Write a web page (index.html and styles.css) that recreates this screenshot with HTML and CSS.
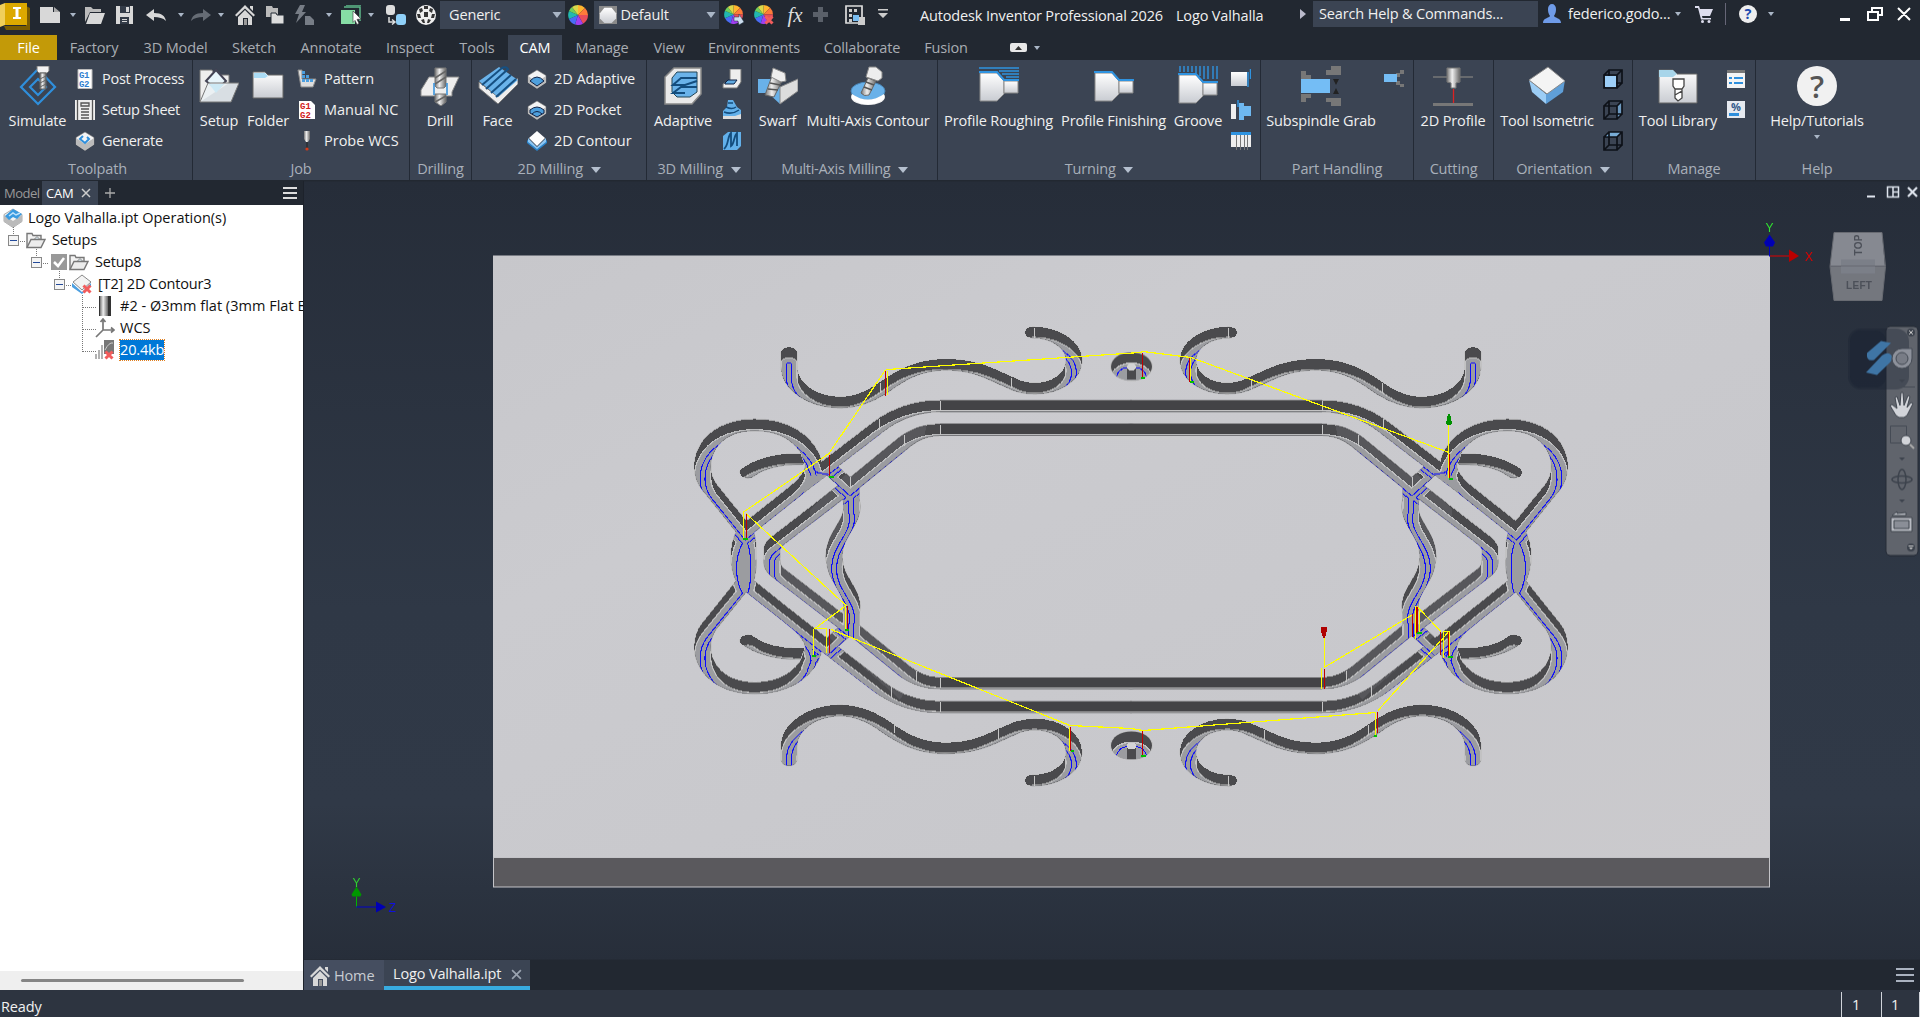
FILE: index.html
```html
<!DOCTYPE html>
<html lang="en">
<head>
<meta charset="utf-8">
<title>Autodesk Inventor Professional 2026</title>
<link rel="stylesheet" href="styles.css">
</head>
<body>
<svg class="defs" width="0" height="0">
  <defs>
    <linearGradient id="steel"><stop offset="0" stop-color="#777"/><stop offset=".4" stop-color="#eee"/><stop offset="1" stop-color="#666"/></linearGradient>
    <linearGradient id="paper" x2="0" y2="1"><stop offset="0" stop-color="#fff"/><stop offset="1" stop-color="#c9ccd2"/></linearGradient>
    <symbol id="wheel" viewBox="0 0 20 20"><g stroke-width="0"><path fill="#ffb52e" d="M10 10V0A10 10 0 0 1 17 3z"/><path fill="#ff7b3a" d="M10 10 17 3A10 10 0 0 1 20 10z"/><path fill="#e84d5b" d="M10 10H20A10 10 0 0 1 15 18.700z"/><path fill="#a03ff0" d="M10 10 15 18.700A10 10 0 0 1 7 19.500z"/><path fill="#4a6cf5" d="M10 10 7 19.500A10 10 0 0 1 1 14z"/><path fill="#22b8b0" d="M10 10 1 14A10 10 0 0 1 1 6z"/><path fill="#6fd05a" d="M10 10 1 6A10 10 0 0 1 4 2z"/><path fill="#d9d94a" d="M10 10 4 2A10 10 0 0 1 10 0z"/></g></symbol>
    <symbol id="caret" viewBox="0 0 6 4"><path fill="#aab6c6" d="M0 0h6L3 4z"/></symbol>
    <symbol id="house" viewBox="0 0 20 20"><path fill="#d8d8d8" d="M10 0 20 10l-1.500 1.500L10 3.500l-8.500 8L0 10zM15 1h3v5l-3-3z"/><path fill="#d8d8d8" d="M10 5l7 7v8h-4v-7H8v7H3v-8z"/><path fill="#999" d="M9 14h3v6H9z"/></symbol>
    <symbol id="turned" viewBox="0 0 40 40"><path fill="url(#paper)" stroke="#888" d="M1 7H18l7 8v13l-7 7H1z"/><path fill="url(#paper)" stroke="#888" d="M25 15H39V27H25z"/><path fill="none" stroke="#2f93e0" stroke-width="2" d="M0 6H18l7 8H40"/></symbol>
    <symbol id="block" viewBox="0 0 20 20"><path fill="#f4f4f4" stroke="#777" stroke-width=".6" d="M10 1l9 5.500v7L10 19.500 1 13.500v-7z"/><path fill="#bbb" d="M1 7l9 6 9-6v6.500l-9 6-9-6z"/></symbol>
    <symbol id="cube" viewBox="0 0 20 20"><path fill="none" stroke="#0d1118" stroke-width="1.700" d="M1 6h13v13H1zM6 1h13v13H6zM1 6l5-5M14 6l5-5M14 19l5-5M1 19l5-5"/></symbol>
    <symbol id="folder" viewBox="0 0 20 16"><path fill="#f2f2f2" stroke="#777" stroke-width="1.400" d="M1 15V1h5l1 2h8v4"/><path fill="#d9eaf2" stroke="#888" d="M6 9l5-5 4 4"/><path fill="#ececec" stroke="#777" stroke-width="1.400" d="M1 15 5 7h14l-4 8z"/></symbol>
    <symbol id="cross" viewBox="0 0 10 10"><path stroke="#f25c5c" stroke-width="3" d="M1.500 1.500l7 7m0-7l-7 7"/></symbol>
  </defs>
</svg>

<header class="titlebar">
  <div class="quick">
    <svg class="logo" viewBox="0 0 30 30"><path fill="#7a5c00" d="M4 26h22V6l4 2v22H6z"/><path fill="#f0cf5a" d="M0 5l5-2v22l-5 2z"/><path fill="#dca900" d="M5 3h22v22H5z"/><path fill="#fff" d="M13 7h8v2h-2.500v8H21v2h-8v-2h2.500V9H13z"/></svg>
    <svg viewBox="0 0 20 20"><path fill="#d8d8d8" d="M0 2h13v5h7v11H0z"/><path fill="#aaa" d="M14 2l6 5h-6z"/></svg>
    <svg class="car"><use href="#caret"/></svg>
    <svg viewBox="0 0 20 20"><path fill="#bbb" d="M0 2h6l2 2h8v3H5L0 17z"/><path fill="#d8d8d8" d="M5 8h15l-4 11H1z"/></svg>
    <svg viewBox="0 0 20 20"><path fill="#d8d8d8" d="M1 1h17v18H1z"/><path fill="#333b47" d="M5 1h10v7H5zM5 12h9v7H5z"/><path fill="#d8d8d8" d="M11 2h3v5h-3zM7 14h5v1H7zM7 16h5v1H7z"/></svg>
    <svg viewBox="0 0 20 20"><path fill="#d8d8d8" d="M0 10l8-6v4c8 0 11 3 12 8-3-3-7-4-12-4v4z"/></svg>
    <svg class="car"><use href="#caret"/></svg>
    <svg viewBox="0 0 20 20"><path fill="#666c75" d="M20 10l-8-6v4C4 8 1 11 0 16c3-3 7-4 12-4v4z"/></svg>
    <svg class="car"><use href="#caret"/></svg>
    <svg><use href="#house"/></svg>
    <svg viewBox="0 0 20 20"><path fill="#bbb" d="M1 1h6l1 2h5v9H1z"/><path fill="#ddd" stroke="#232a34" d="M6 8h5l1 2h7v9H6z"/></svg>
    <svg viewBox="0 0 20 20"><path fill="#777d86" d="M6 0h5L8 7h4L2 18l3-9H1zM11 11h5l4 4v5h-9z"/></svg>
    <svg class="car"><use href="#caret"/></svg>
    <svg viewBox="0 0 20 20"><path fill="none" stroke="#5fb98a" stroke-width="1.500" d="M3 2h16v14M5 0h15"/><path fill="#86dda5" d="M0 5h14v14H0z"/><path fill="#fff" stroke="#333" stroke-width=".6" d="M12 6l8 8-4 .4 2 4-2 1-2-4-2 2z"/></svg>
    <svg class="car"><use href="#caret"/></svg>
    <svg viewBox="0 0 20 20"><rect width="9" height="10" rx="3" fill="#ddd"/><rect x="10" y="9" width="10" height="11" rx="3" fill="#8fd0f8"/><path fill="none" stroke="#ddd" stroke-width="1.500" d="M3 12v5h5M6 14.500l3 2.500-3 2.500"/></svg>
    <svg viewBox="0 0 20 20"><circle cx="10" cy="10" r="10" fill="#eee"/><path fill="#333" d="M8 1h4v3H8zM3 4l3-1 1 3-3 2zM17 4l-3-1-1 3 3 2zM8 7h4v5H8zM1 9h3l1 4H2zM19 9h-3l-1 4h3zM5 15l3-1 1 4H7zM15 15l-3-1-1 4h2z"/></svg>
    <div class="combo"><span>Generic</span><svg class="big-caret"><use href="#caret"/></svg></div>
    <svg><use href="#wheel"/></svg>
    <div class="combo"><svg class="swatch" viewBox="0 0 20 20"><path fill="#8a8a8a" d="M0 0h20v20H0z"/><path fill="url(#paper)" d="M6 2h8l5 6v6l-5 5H6l-5-5V8z"/></svg><span>Default</span><svg class="big-caret"><use href="#caret"/></svg></div>
    <svg viewBox="0 0 20 20"><use href="#wheel" width="19" height="19"/><path fill="#cde" stroke="#234" stroke-width=".5" d="M10 12h5V9l5 8-5 3-1-4h-4z"/></svg>
    <svg viewBox="0 0 20 20"><use href="#wheel" width="19" height="19"/><use href="#cross" x="10" y="10" width="10" height="10"/></svg>
    <i class="fx">fx</i>
    <svg viewBox="0 0 20 20"><path fill="#5a6069" d="M7 2h5v5h5v5h-5v5H7v-5H2V7h5z"/></svg>
    <svg viewBox="0 0 20 20"><path fill="none" stroke="#ddd" stroke-width="1.700" d="M1 1h16v17H1z"/><path fill="#ccc" d="M4 4h3v3H4zM9 4h3v3H9zM4 9h3v3H4zM4 14h3v3H4zM13 12h7v8h-7z"/><path fill="#79bcf0" d="M8 10h6v6H8z"/></svg>
    <svg class="more" viewBox="0 0 12 12"><path fill="#ccc" d="M1 0h10v1.500H1zM1 4h10l-5 5z"/></svg>
  </div>
  <div class="caption"><span class="app">Autodesk Inventor Professional 2026</span><span class="doc">Logo Valhalla</span></div>
  <div class="account">
    <svg class="expander" viewBox="0 0 6 10"><path fill="#bbc" d="M0 0l6 5-6 5z"/></svg>
    <div class="search">Search Help &amp; Commands...</div>
    <svg viewBox="0 0 18 20"><path fill="#6f9be8" d="M5 5a4 5 0 0 1 8 0c0 4-1 5-2 7 1 2 7 2 7 7H0c0-5 6-5 7-7-1-2-2-3-2-7z"/></svg>
    <span class="user">federico.godo...</span><svg class="car"><use href="#caret"/></svg>
    <svg class="cart" viewBox="0 0 18 18"><path fill="#dde" d="M0 1h4l1 3h13l-3 7H7l.5 2H16v1.500H6L3 3H0z"/><circle cx="7.500" cy="16.500" r="1.500" fill="#dde"/><circle cx="14" cy="16.500" r="1.500" fill="#dde"/></svg>
    <span class="rule"></span>
    <span class="q">?</span><svg class="car"><use href="#caret"/></svg>
    <svg class="win" viewBox="0 0 80 16"><path fill="#fff" d="M2 12h10v3H2z"/><path fill="none" stroke="#fff" stroke-width="2" d="M34 5V2h10v7h-3M30 6h10v8H30zM60 2l12 12M72 2L60 14"/></svg>
  </div>
</header>

<nav class="tabs">
  <span class="file">File</span><span>Factory</span><span>3D Model</span><span>Sketch</span><span>Annotate</span><span>Inspect</span><span>Tools</span><span class="active">CAM</span><span>Manage</span><span>View</span><span>Environments</span><span>Collaborate</span><span>Fusion</span>
  <span class="mini"><svg viewBox="0 0 17 9"><rect width="17" height="9" rx="2" fill="#e8e8e8"/><path fill="#333" d="M5 7l3.500-4L12 7z"/></svg><svg class="car"><use href="#caret"/></svg></span>
</nav>

<section class="ribbon">
  <div class="panel toolpath"><div class="tools">
    <div class="big"><svg viewBox="0 0 40 40"><path fill="none" stroke="#2f8fdc" stroke-width="2.200" d="M20 3 37 21 20 38 3 21zM20 13l8 8-8 8-8-8z"/><path fill="#f2f2f2" stroke="#777" d="M19 0h12v5l-2 2h-8l-2-2z"/><path fill="url(#steel)" stroke="#666" d="M22 7h6v16h-6z"/><path stroke="#666" d="M22 13l6-3m-6 7l6-3m-6 7l6-3"/></svg><span>Simulate</span></div>
    <ul><li><svg viewBox="0 0 20 20"><path fill="#fff" stroke="#bbb" d="M3 .5h14v19H3z"/><text x="4" y="9" class="g blue">G1</text><text x="4" y="18" class="g blue">G2</text></svg>Post Process</li><li><svg viewBox="0 0 20 20"><path fill="#eee" d="M0 0h20v20H0z"/><path fill="none" stroke="#555" stroke-width="1.300" d="M2.500 0v20M17.500 0v20M6 3h8v3H6zM6 9h8M6 12h8M6 15h8M6 18h8"/></svg>Setup Sheet</li><li><svg viewBox="0 0 20 20"><use href="#block"/><path fill="none" stroke="#2f8fdc" stroke-width="2" d="M8 5l-3 3 5 4 4-4-2-2"/></svg>Generate</li></ul>
  </div><h2>Toolpath</h2></div>

  <div class="panel job"><div class="tools">
    <div class="big setup"><svg viewBox="0 0 40 40"><path fill="#eee" stroke="#777" d="M1 36V4h12l3 5h14v8"/><path fill="#e8f5fb" stroke="#445" stroke-width="2" d="M7 15 17 4l10 11-9 9z"/><path fill="#eaf0f3" fill-opacity=".9" stroke="#777" d="M1 36 9 17h31l-8 19z"/><path fill="#cde9f5" d="M10 18h15l-8 9z"/></svg><span>Setup</span></div>
    <div class="big folder"><svg viewBox="0 0 40 40"><path fill="url(#paper)" stroke="#666" d="M5 6h12l3 3h15v23H5z"/><path fill="#abdcf5" d="M6 7h11l3 3-3 2H6z"/></svg><span>Folder</span></div>
    <ul><li><svg viewBox="0 0 20 20"><path fill="#ddd" stroke="#888" d="M1 1h4v9h14l-3 8H4z"/><path fill="#4c9fe0" d="M5 2h3v3H5zM5 6h3v3H5zM9 6h3v3H9zM5 10h3v3H5zM9 10h3v3H9zM13 10h3v3h-3z"/></svg>Pattern</li><li><svg viewBox="0 0 20 20"><path fill="#fff" d="M2 1h12l4 4v14H2z"/><text x="3" y="9" class="g red">G1</text><text x="3" y="18" class="g red">G2</text></svg>Manual NC</li><li><svg viewBox="0 0 20 20"><path fill="url(#steel)" d="M7 0h6v8l-2 3H9L7 8z"/><path stroke="#222" d="M10 11v6"/><circle cx="10" cy="18" r="1.600" fill="#d33a1a"/></svg>Probe WCS</li></ul>
  </div><h2>Job</h2></div>

  <div class="panel drilling"><div class="tools"><div class="big"><svg viewBox="0 0 40 40"><path fill="#eee" stroke="#888" d="M1 24 9 11h30l-7 15v4H1z"/><path fill="url(#steel)" stroke="#777" d="M15 2h11v18l-2 2h-7l-2-2zM15 28h11v8l-5 4-6-4z"/><path stroke="#666" stroke-width="1.500" d="M15 12l11-7M15 18l11-7M15 36l11-6"/><path stroke="#2f8fdc" stroke-width="1.500" d="M14 17v12M27 17v12"/></svg><span>Drill</span></div></div><h2>Drilling</h2></div>

  <div class="panel milling"><div class="tools">
    <div class="big"><svg viewBox="0 0 40 40"><path fill="#eee" stroke="#777" d="M1 22 20 38 40 18v-6L20 31 1 16z"/><path fill="#6ab3ea" d="M1 15 21 1l19 13-20 17z"/><path fill="none" stroke="#165082" stroke-width="2" d="M4 19 24 2q4-2 6 1L8 23M13 27 33 9M18 31 38 13"/></svg><span>Face</span></div>
    <ul><li><svg viewBox="0 0 20 20"><use href="#block"/><path fill="#4e9fdc" stroke="#124" d="M3 12q7-8 14 0l-7 5z"/></svg>2D Adaptive</li><li><svg viewBox="0 0 20 20"><use href="#block"/><path fill="#4e9fdc" stroke="#124" d="M3 10q7-6 14 0v3l-7 4-7-4zM5 14q5-5 10 0"/></svg>2D Pocket</li><li><svg viewBox="0 0 20 20"><path fill="#2a82c8" d="M0 9l10 8L20 9v3l-10 8L0 12z"/><path fill="#8dc6f2" d="M1 7l9 9 9-9v4l-9 7-9-7z"/><path fill="#fff" d="M10 0l8 7-8 8-8-8z"/></svg>2D Contour</li></ul>
  </div><h2>2D Milling <b></b></h2></div>

  <div class="panel three"><div class="tools">
    <div class="big"><svg viewBox="0 0 40 40"><path fill="#e9e9e9" stroke="#888" stroke-width="1.500" d="M2 38V11l9-9h27v26l-9 10z"/><path fill="#6ab3ea" stroke="#245" d="M9 26V12l5-6h20v20l-7 5H14z"/><path fill="none" stroke="#134d7e" stroke-width="2" d="M34 12H18l-8 7h12l12-4M34 21H18l-8 6h12"/></svg><span>Adaptive</span></div>
    <ul class="icons"><li><svg viewBox="0 0 20 20"><path fill="#eee" stroke="#777" d="M8 0h11v13l-4 6H1v-4l7-4z"/><path fill="#5fa9df" stroke="#124" d="M3 14l3-3h9l-3 4H3z"/></svg></li><li><svg viewBox="0 0 20 20"><path fill="#ddd" d="M1 12h18v7H1z"/><path fill="#62b0ea" d="M6 0h5l4 7 4 3v4l-6 2H1v-5l4-4z"/><path fill="none" stroke="#134d7e" stroke-width="1.500" d="M6 3h5M4 7q6 3 10 0M2 12q8 3 15-2"/></svg></li><li><svg viewBox="0 0 20 20"><path fill="#62b0ea" d="M1 5l5-4h13v14l-4 4H1z"/><path fill="none" stroke="#134d7e" stroke-width="1.800" d="M2 18C7 14 5 6 9 2v13C13 12 11 6 15 2v13"/></svg></li></ul>
  </div><h2>3D Milling <b></b></h2></div>

  <div class="panel multi"><div class="tools">
    <div class="big swarf"><svg viewBox="0 0 40 40"><path fill="#69b1e9" d="M0 13h13l9 8v17L10 27H0z"/><path fill="#ddd" stroke="#888" d="M22 38V21l18-8v12z"/><path fill="url(#steel)" stroke="#666" d="M14 10l10 5-8 16-9-2z"/><path stroke="#555" stroke-width="1.500" d="M12 17l10 2M10 23l10 1"/><path fill="#eee" stroke="#888" d="M15 2l12 5 1 8-5 1-10-5z"/></svg><span>Swarf</span></div>
    <div class="big mac"><svg viewBox="0 0 40 40"><ellipse cx="20" cy="31" rx="17" ry="8" fill="#eee"/><ellipse cx="20" cy="25" rx="17" ry="9" fill="#69b1e9" stroke="#4a87b8"/><path fill="#fff" d="M4 28q16 11 32 0v5q-16 11-32 0z"/><path fill="url(#steel)" stroke="#666" d="M20 12l8 3-7 14q-5 2-8-2z"/><path stroke="#555" stroke-width="1.500" d="M18 16l8 3M16 21l8 3"/><path fill="#eee" stroke="#888" d="M21 1h7l6 5v6l-4 3-12-4z"/></svg><span>Multi-Axis Contour</span></div>
  </div><h2>Multi-Axis Milling <b></b></h2></div>

  <div class="panel turning"><div class="tools">
    <div class="big rough"><svg viewBox="0 0 40 40"><use href="#turned"/><path stroke="#2f93e0" stroke-width="1.500" d="M0 2h40M20 5h20M23 8h17M27 11h13"/></svg><span>Profile Roughing</span></div>
    <div class="big finish"><svg><use href="#turned"/></svg><span>Profile Finishing</span></div>
    <div class="big groove"><svg viewBox="0 0 40 40"><use href="#turned" y="2"/><path stroke="#2f93e0" stroke-width="1.400" d="M2 0v6M6 0v6M10 0v6M14 0v6M18 0v7M22 0v10M26 0v13M30 0v13M35 0v13M39 0v13"/></svg><span>Groove</span></div>
    <ul class="icons"><li><svg viewBox="0 0 20 20"><path fill="url(#paper)" d="M0 3h16v14H0z"/><path stroke="#2f93e0" stroke-width="1.500" d="M17 3v15M19.500 0v10"/></svg></li><li><svg viewBox="0 0 20 20"><path fill="#eee" d="M0 4h5v15H0z"/><path fill="#6eb8f0" d="M8 3h5v3h7v10h-7v4H8z"/><path stroke="#2f93e0" stroke-width="1.500" d="M7 0v7"/></svg></li><li><svg viewBox="0 0 20 20"><path fill="#eee" d="M0 4h20v12H0z"/><path fill="#2f93e0" d="M0 1h20v3H0z"/><path stroke="#777" d="M5.500 4v15M9.500 4v15M13.500 4v15M16.500 4v15"/></svg></li></ul>
  </div><h2>Turning <b></b></h2></div>

  <div class="panel part"><div class="tools">
    <div class="big"><svg viewBox="0 0 40 40"><path fill="#777" d="M0 5h5v4h5v5H0zM0 28h10v4H5v4H0zM25 4h5V0h10v9H25zM25 32h15v8H30v-4h-5z"/><path fill="#74bdf5" d="M0 13h29v14H0z"/><path fill="#222" d="M32 13h6l-3 6zM32 28h6l-3-6z"/></svg><span>Subspindle Grab</span></div>
    <ul class="icons"><li><svg viewBox="0 0 20 20"><path fill="#777" d="M12 4h4V1h4v4h-4v3h-4zM12 12h4v3h4v3h-4v-2h-4z"/><path fill="#74bdf5" d="M0 5h13v8H0z"/></svg></li></ul>
  </div><h2>Part Handling</h2></div>

  <div class="panel cutting"><div class="tools"><div class="big"><svg viewBox="0 0 40 40"><path stroke="#777" stroke-width="1.500" d="M0 11h40"/><path fill="#777" d="M0 37h40v3H0z"/><path fill="url(#steel)" stroke="#777" d="M14 2h13v14l-4 1v5h-5v-5l-4-1z"/><path stroke="#d22" stroke-width="1.300" d="M20.500 23v14"/></svg><span>2D Profile</span></div></div><h2>Cutting</h2></div>

  <div class="panel orient"><div class="tools">
    <div class="big"><svg viewBox="0 0 40 40"><path fill="#9ccdf5" d="M2 14l17 14v10L5 26z"/><path fill="#5f9fd8" d="M19 28 38 14l-2 12-17 12z"/><path fill="#f4f4f4" stroke="#888" d="M2 14 21 1l17 14-18 13z"/></svg><span>Tool Isometric</span></div>
    <ul class="icons"><li><svg viewBox="0 0 20 20"><use href="#cube"/><path fill="#9dcef7" d="M2 7h11v11H2z"/></svg></li><li><svg viewBox="0 0 20 20"><path fill="#6d9ac0" d="M14 6l5-5v13l-5 5z"/><use href="#cube"/></svg></li><li><svg viewBox="0 0 20 20"><path fill="#78acd6" d="M1 6l5-5h13l-5 5z"/><use href="#cube"/></svg></li></ul>
  </div><h2>Orientation <b></b></h2></div>

  <div class="panel manage"><div class="tools">
    <div class="big"><svg viewBox="0 0 40 40"><path fill="url(#paper)" stroke="#666" d="M1 4h14l4 4h20v29H1z"/><path fill="#a8d5ea" d="M1 4h14l4 4-4 3H1z"/><path fill="#fff" stroke="#444" stroke-width="1.300" d="M15 13h11v7l-2 3h-7l-2-3zM17 23h7v9l-4 3-3-3zM17 29l7-4"/></svg><span>Tool Library</span></div>
    <ul class="icons"><li><svg viewBox="0 0 20 20"><path fill="#f4f4f4" d="M1 1h18v18H1z"/><path fill="#777" d="M1 1h18v3H1z"/><path stroke="#2f8fdc" stroke-width="2" d="M3 9h3m2 0h9M3 14h3m2 0h9"/></svg></li><li><svg viewBox="0 0 20 20"><path fill="#e6eaf0" d="M1 1h18v17H1z"/><text x="5" y="11" class="pc">%</text><path fill="#2f8fdc" d="M3 13h10v3H3z"/></svg></li></ul>
  </div><h2>Manage</h2></div>

  <div class="panel help"><div class="tools"><div class="big"><div class="disc">?</div><span>Help/Tutorials</span><svg class="car"><use href="#caret"/></svg></div></div><h2>Help</h2></div>
</section>

<main class="work">
  <aside class="browser">
    <div class="btabs"><span class="model">Model</span><span class="cam">CAM<svg viewBox="0 0 10 10"><path stroke="#ccc" stroke-width="1.500" d="M1 1l8 8m0-8L1 9"/></svg></span><svg class="plus" viewBox="0 0 10 10"><path stroke="#aaa" stroke-width="1.300" d="M5 0v10M0 5h10"/></svg><svg class="menu" viewBox="0 0 14 12"><path stroke="#ddd" stroke-width="2" d="M0 1h14M0 6h14M0 11h14"/></svg></div>
    <div class="tree">
      <div class="row l0"><svg viewBox="0 0 20 20"><use href="#block"/><path fill="#3b9be0" d="M2 8 10 1l9 5-5 5-4-2-4 3z"/><path stroke="#bfe2fa" stroke-width="1.500" d="M6 8l4-3 3 2 4-2" fill="none"/></svg><span>Logo Valhalla.ipt Operation(s)</span></div>
      <div class="row l1"><em></em><svg class="f"><use href="#folder"/></svg><span>Setups</span></div>
      <div class="row l2"><em></em><svg class="chk" viewBox="0 0 16 16"><path fill="#999" d="M0 0h16v16H0z"/><path fill="none" stroke="#fff" stroke-width="2.500" d="M3 8l4 4 6-8"/></svg><svg class="f"><use href="#folder"/></svg><span>Setup8</span></div>
      <div class="row l3"><em></em><svg viewBox="0 0 20 20"><path fill="#4c9fe0" d="M0 9l10 9 9-9v3l-9 8-10-7z"/><path fill="#f3f3f3" stroke="#888" d="M10 1l9 7-9 8-9-8z"/><use href="#cross" x="10" y="10" width="10" height="10"/></svg><span>[T2] 2D Contour3</span></div>
      <div class="row l4"><svg viewBox="0 0 20 20"><path fill="#333" d="M4 0h12v20H4z"/><path fill="url(#steel)" d="M5 0h8v20H5z"/></svg><span>#2 - Ø3mm flat (3mm Flat E</span></div>
      <div class="row l4"><svg viewBox="0 0 20 20"><path fill="none" stroke="#777" stroke-width="1.700" d="M8 2v10h11M8 12l-7 7M5.500 4 8 1l2.500 3M16 9.500l3 2.500-3 2.500"/></svg><span>WCS</span></div>
      <div class="row l4"><svg viewBox="0 0 20 20"><path stroke="#888" stroke-width="1.300" d="M1 14v5M4 10v9M7 5v14"/><path fill="#777" d="M9 0h10v14H9z"/><path stroke="#ccc" d="M10 10q4-8 8-7" fill="none"/><use href="#cross" x="9" y="10" width="10" height="10"/></svg><span class="sel">20.4kb</span></div>
      <svg class="links" viewBox="0 0 110 170"><path fill="none" stroke="#777" stroke-dasharray="1 1" d="M13.500 22v8M20 36.500h6M36.500 44v8M43 58.500h5M59.500 66v8M66 80.500h6M82.500 90v57M83 102.500h13M83 124.500h13M83 146.500h13"/></svg>
    </div>
    <div class="hscroll"><i></i></div>
  </aside>

  <section class="view">
    <svg class="scene" viewBox="304 182 1616 778">
      <defs>
        <linearGradient id="bg" x2="0" y2="1"><stop offset="0" stop-color="#262d39"/><stop offset=".55" stop-color="#2f3846"/><stop offset=".8" stop-color="#303947"/><stop offset="1" stop-color="#272e3a"/></linearGradient>
        <linearGradient id="plate" x2="1" y2="1"><stop offset="0" stop-color="#c7c7cb"/><stop offset=".3" stop-color="#cbcbcf"/><stop offset=".7" stop-color="#c8c8cc"/><stop offset="1" stop-color="#cbcacd"/></linearGradient>
        <g id="frame-quarter">
          <path d="M0-215H-191C-215-215-235-204-252-186L-304-129-339-90-384-39"/>
          <path fill="currentColor" d="M-386-36C-391-22-392-12-392 0H-383C-383-12-382-22-386-36z"/>
          <path d="M-386-36-422-100C-438-131-425-188-376-188C-346-188-328-168-320-145C-314-128-318-113-339-90"/>
          <path d="M-321-145C-316-125-310-120-304-129"/>
          <path d="M0-181H-191C-206-181-217-174-227-163L-281-100-304-129"/>
          <path d="M-281-102-293-89-353-23C-361-14-359-6-359 0"/>
          <path d="M-280-102V-82C-274-50-297-35-297 0"/>
        </g>
        <g id="scroll-quarter">
          <path d="M-342-291V-272C-342-243-319-220-290-220C-274-220-262-228-251-238C-240-248-220-274-186-274C-152-274-138-258-120-248Q-110-240-96-240C-74-240-57-258-57-280C-57-302-75-320-98-320"/>
          <path d="M-383-120C-370-134-350-140-330-139"/>
        </g>
        <g id="frame" transform="translate(1131 557) scale(1 .7)" fill="none" stroke-linecap="round" stroke-linejoin="round">
          <use href="#frame-quarter"/><use href="#frame-quarter" transform="scale(-1 1)"/><use href="#frame-quarter" transform="scale(1 -1)"/><use href="#frame-quarter" transform="scale(-1 -1)"/>
        </g>
        <g id="scrolls" transform="translate(1131 557) scale(1 .7)" fill="none" stroke-linecap="round" stroke-linejoin="round">
          <use href="#scroll-quarter"/><use href="#scroll-quarter" transform="scale(-1 1)"/><use href="#scroll-quarter" transform="scale(1 -1)"/><use href="#scroll-quarter" transform="scale(-1 -1)"/>
        </g>
        <mask id="frame-opening" maskUnits="userSpaceOnUse" x="493" y="256" width="1277" height="602"><use href="#frame" class="white" stroke-width="16.500"/></mask>
        <mask id="scroll-opening" maskUnits="userSpaceOnUse" x="493" y="256" width="1277" height="602"><use href="#scrolls" class="white" stroke-width="16"/></mask>
        <clipPath id="ring-opening"><ellipse cx="1131.500" cy="367" rx="20.500" ry="14"/></clipPath>
        <g id="ring"><ellipse cx="1131.500" cy="367" rx="21.500" ry="14.800" fill="#c2c2c3"/><g clip-path="url(#ring-opening)"><path fill="#4a4a4d" d="M1110 352h43v30h-43z"/><ellipse cx="1131.500" cy="377.500" rx="20.500" ry="14.500" fill="#c2c2c3"/><ellipse cx="1131.500" cy="378.500" rx="20" ry="14" fill="#9b9ca0"/><path fill="none" stroke="#0a0aff" d="M1116 378q3-10 12-10M1147 378q-3-10-12-10"/><path fill="#4a4a4d" d="M1127 369h9v11h-9z"/></g><ellipse cx="1131.500" cy="367.500" rx="4.500" ry="3.500" fill="#d4d4d6"/></g>
      </defs>
      <rect x="304" y="182" width="1616" height="778" fill="url(#bg)"/>
      <rect x="493" y="256" width="1277" height="602" fill="url(#plate)"/>
      <rect x="493.500" y="858" width="1276" height="29.500" fill="#5a595d" stroke="#c4c4c8"/>
      <g shape-rendering="crispEdges">
        <use href="#scrolls" class="edge" stroke-width="17.500"/>
        <use href="#scrolls" class="wall" stroke-width="16"/>
        <g mask="url(#scroll-opening)"><g transform="translate(0 10.300)">
          <use href="#scrolls" class="edge" stroke-width="17"/>
          <use href="#scrolls" class="floor" stroke-width="14.500"/>
          <g transform="translate(0 1.700)"><use href="#scrolls" class="path" stroke-width="6"/>
          <use href="#scrolls" class="floor" stroke-width="3.800"/></g>
        </g></g>
        <use href="#frame" class="edge" stroke-width="18"/>
        <use href="#frame" class="wall" stroke-width="16.500"/>
        <path mask="url(#frame-opening)" fill="#57575b" d="M690 560h120v-50l90-90 30-10-15 70-90 80h-60zM1572 560h-120v-50l-90-90-30-10 15 70 90 80h60zM740 560l160 140 20-30-100-110zM1522 560l-160 140-20-30 100-110z"/>
        <path mask="url(#frame-opening)" fill="#434346" d="M940 395h382v45H940zM940 672h382v45H940z"/>
        <g mask="url(#frame-opening)"><g transform="translate(0 10.300)">
          <use href="#frame" class="edge" stroke-width="17.500"/>
          <use href="#frame" class="floor" stroke-width="15"/>
          <g transform="translate(0 1.700)"><use href="#frame" class="path" stroke-width="6"/>
          <use href="#frame" class="floor" stroke-width="3.800"/></g>
        </g></g>
        <path fill="#9b9ca0" d="M807 476l20 0-23 17zM1455 476l-20 0 23 17z"/>
        <path fill="none" stroke="#0a0aff" d="M813 466q1 8 9 8h6M1449 466q-1 8-9 8h-6"/>
        <use href="#ring"/><use href="#ring" y="379"/>
        <path stroke="#c6c6c6" fill="none" d="M940.500 401v10M940.500 425v10M879.500 419v11M904.500 435v11M880.500 383v10M1011.500 378v10M1034.500 328v10M1322.500 401v10M1322.500 425v10M1383.500 419v11M1358.500 435v11M1382.500 383v10M1251.500 380v10M1228.500 328v10M940.500 678v10M940.500 702v10M1322.500 702v10M891.500 686v11M916.500 671v11M894.500 723v10M998.500 729v10M1034.500 776v10M1371.500 686v11M1346.500 671v11M1368.500 725v10M1264.500 730v10M1228.500 776v10M850.500 477v10M1412.500 477v10"/>
        <g fill="none" stroke="#ff0" stroke-width="1.200">
          <path d="M746 514l100 92-31 23h12M831 630l239 96 61 3 12 2 233-18M1378 711l71-79h-6M1441 632l-24-25M1413 615l-89 53M743 513l86-59 56-83 2-1 253-17 3-1 48 6 258 95"/>
          <path d="M887.500 371v24M743.500 513v25M845.500 606v24M813.500 629v28M826.500 629v24M1069.500 727v24M1375.500 713v23M1415.500 606v33M1419.500 608v24M1443.500 632v26M1449.500 632v24M1321.500 668v21M1190.500 358v24M1448.500 425v53M1324.500 638v30"/>
        </g>
        <path stroke="#c00000" d="M885.500 371v25M829.500 455v21M746.500 514v25M1142.500 353v25M1189.500 358v24M1449.500 454v24M847.500 606v24M829.500 629v24M1070.500 727v24M1142.500 731v25M1377.500 712v21M1412.500 614v23M1416.500 607v26M1417.500 607v26M1440.500 632v23M1448.500 632v25M1324.500 669v20"/>
        <path stroke="#00c000" stroke-width="2" d="M829 477h5M743 539h5M845 630h4M812 656h4M1141 378h4M1190 382h4M1449 479h4M1141 756h5M1071 751h3M1448 657h5M1417 633h5M1374 736h3"/>
        <path fill="#009000" d="M1448 414h2l2 10h-1v1h-4v-1h-1z"/><path fill="#b00000" d="M1321 627h6v4l-2 7h-2l-2-6z"/>
      </g>
      <g class="axes"><path stroke="#0000c8" d="M1769.500 245v12"/><path fill="#0000b4" d="M1769.500 235l5.500 8-2 4h-7l-2-4z"/><path stroke="#e00000" d="M1770 256.500h20"/><path fill="#b80000" d="M1789 250l10 6.500-10 6z"/><text x="1765.500" y="232" fill="#30e030">Y</text><text x="1805" y="261" fill="#e00000">X</text>
      <path stroke="#00b400" d="M356.500 897v11"/><path fill="#009600" d="M356.500 887l5 8-1 2h-8l-1-2z"/><path stroke="#0000c8" d="M356 907.500h20"/><path fill="#0000b4" d="M376 902l10 5.500-10 5.500z"/><text x="352.500" y="887" fill="#2fd02f">Y</text><text x="388.500" y="912" fill="#1010e0">Z</text></g>
      <g class="viewcube"><path fill="#868991" d="M1834 233h48l3 34h-55z"/><path fill="#74777e" d="M1830 267h55.500l-3.500 34h-48z"/><path fill="#7b7f88" d="M1841 260h34v14h-34z"/><path stroke="#686b72" fill="none" d="M1834 233h48l3.500 34-3.500 34h-48l-4-34zM1830 266.500h55"/><text x="1846" y="289">LEFT</text><text transform="translate(1862 256) rotate(-90)">TOP</text></g>
      <g class="navbar"><rect x="1886" y="327" width="32" height="229" rx="4" fill="#60646c" stroke="#262c37"/>
        <rect x="1848" y="329" width="61" height="61" rx="13" fill="#1a2233" fill-opacity=".38"/><rect x="1850" y="331" width="36" height="57" rx="11" fill="#1a2233" fill-opacity=".4"/>
        <path fill="#3f75a5" d="M1881 341.500l10 2-17 17q-8 2-7-7zM1866 373l16-17q7-5 10 1 0 4-2 6l-13 12.500z"/>
        <circle cx="1911" cy="333" r="4" fill="#3d434d"/><path stroke="#ccc" d="M1909 331l4 4m0-4l-4 4"/><path fill="#8d919b" stroke="#444a54" d="M1902 349h10v10a10 10 0 1 1-10-10z"/><circle cx="1902" cy="359" r="6" fill="#787c86" stroke="#444a54"/><path stroke="#454b55" d="M1889 387.500h26"/>
        <path fill="#d2d4d9" stroke="#40464f" d="M1896 416l-6-10 2-1 5 4-2-11 2-1 3 9 1-13h2l1 13 4-10 2 1-3 11 4-5 2 1-6 12-3 2h-5z"/>
        <path fill="none" stroke="#454b55" d="M1890.500 426.500h16v17h-16z"/><circle cx="1906" cy="441" r="5" fill="#d2d4d9" stroke="#40464f"/><path stroke="#aaa" stroke-width="2" d="M1910 445l4 4"/>
        <g fill="none" stroke="#3d434d" stroke-width="1.500"><ellipse cx="1902" cy="480" rx="4" ry="10"/><ellipse cx="1902" cy="480" rx="10" ry="3.500"/></g>
        <path fill="#b8bbc2" stroke="#40464f" d="M1891 518h21v14h-21zM1892 516l5-4v2l9-1v3z"/><path fill="#8a8e97" stroke="#40464f" d="M1894 521h15v8h-15z"/><path fill="#3d434d" d="M1899 380h6l-3 3zM1899 458h6l-3 3zM1899 500h6l-3 3z"/><circle cx="1911" cy="548" r="4" fill="#3d434d"/><path stroke="#ccc" d="M1908.500 546.500h5"/><path fill="#ccc" d="M1909 548h4l-2 2z"/></g>
      <g fill="none" stroke="#dfe5ee" stroke-width="1.500"><path stroke-width="2" d="M1867 197h8"/><path d="M1887.500 187.500h11v10h-11zM1893 188v10M1893 192.500h6"/><path stroke-width="2.200" d="M1908 188l9 9m0-9l-9 9"/></g>
    </svg>
    <footer class="doctabs"><span class="home"><svg><use href="#house"/></svg>Home</span><span class="docfile">Logo Valhalla.ipt<svg viewBox="0 0 10 10"><path stroke="#9aa3b0" stroke-width="1.500" d="M1 1l8 8m0-8L1 9"/></svg></span><svg class="menu" viewBox="0 0 18 16"><path stroke="#aab2bf" stroke-width="2" d="M0 2h18M0 8h18M0 14h18"/></svg></footer>
  </section>
</main>
<footer class="status"><span>Ready</span><b>1</b><b>1</b></footer>
</body>
</html>
```
FILE: styles.css
```css
* { box-sizing: border-box; }
body { margin: 0; width: 1920px; height: 1017px; overflow: hidden; background: #222831; color: #f0f0f0; font: 14.500px/20px "Open Sans", "Noto Sans", sans-serif; letter-spacing: -.15px; display: flex; flex-direction: column; white-space: nowrap; }
svg { display: block; flex: none; width: 20px; height: 20px; }
.defs { position: absolute; width: 0; height: 0; }
svg.car { width: 6px; height: 4px; }

.titlebar { height: 35px; display: grid; grid-template-columns: 900px 400px 620px; }
.quick { display: grid; align-items: center; justify-items: center; height: 28px; grid-template-columns: 30px 40px 6px 37px 24px 38px 12px 28px 12px 36px 23px 36px 14px 30px 10px 40px 20px 133px 18px 138px 18px 42px 20px 32px 36px 34px; }
.quick .logo { width: 30px; height: 30px; }
.combo { width: 125px; height: 28px; background: #3b4453; display: flex; align-items: center; padding: 0 3px 0 9px; }
.combo span { flex: 1; }
.combo .swatch { width: 18px; height: 18px; margin: 0 4px 0 -4px; }
svg.big-caret { width: 10px; height: 6px; }
.quick svg.more { width: 12px; height: 12px; margin-right: 14px; }
.fx { font: italic 21px/20px "Liberation Serif", serif; color: #ddd; }
.caption { height: 31px; display: flex; align-items: center; gap: 13px; padding-left: 20px; }
.account { display: flex; align-items: center; height: 28px; }
.account svg.expander { width: 6px; height: 10px; margin: 0 7px 0 0; }
.search { width: 225px; height: 26px; line-height: 26px; background: #3b4453; padding-left: 6px; margin-right: 4px; }
.user { width: 107px; margin-left: 6px; }
.account svg.cart { width: 18px; height: 18px; margin: 0 12px 0 14px; }
.rule { width: 1px; height: 22px; background: #667; margin-right: 13px; }
.q { width: 18px; height: 18px; border-radius: 50%; background: #eee; color: #1d4bb0; font-weight: 700; line-height: 18px; text-align: center; margin-right: 11px; }
.account svg.win { width: 80px; height: 16px; margin-left: 64px; }

.tabs { height: 25px; display: grid; grid-template-columns: 57px 74px 89px 68px 86px 72px 62px 54px 80px 54px 116px 100px 68px 90px; text-align: center; line-height: 25px; color: #a9adb3; }
.file { background: #c39a08; color: #fff; }
.tabs .active { background: #3b4453; color: #fff; }
.mini { display: flex; align-items: center; justify-content: center; gap: 7px; }
.mini svg { width: 17px; height: 9px; }
.mini svg.car { width: 6px; height: 4px; }

.ribbon { height: 121px; display: grid; grid-template-columns: 193px 217px 62px 175px 105px 186px 323px 153px 80px 139px 123px 164px; background: #3b4453; border-bottom: 1px solid #222831; }
.panel { border-right: 1px solid #232a35; display: flex; flex-direction: column; min-width: 0; }
.panel:last-child { border: 0; }
.tools { height: 99px; display: flex; padding-top: 3px; }
.big { display: flex; flex-direction: column; align-items: center; padding-top: 3px; flex: none; }
.big > svg { width: 40px; height: 40px; margin-bottom: 5px; }
.big > svg.car { width: 6px; height: 4px; margin-top: 4px; }
.disc { width: 40px; height: 40px; margin: 0 0 5px; border-radius: 50%; background: #f1f1f1; color: #555; font-size: 31px; line-height: 40px; font-weight: 600; text-align: center; }
.panel h2 { margin: 0; font-size: 14.500px; font-weight: 400; line-height: 20px; text-align: center; color: #a9b0ba; }
.toolpath h2 { padding-left: 3px; }
.multi h2 { letter-spacing: -.3px; }
.help h2 { width: 122px; }
.panel b { display: inline-block; border: 5px solid transparent; border-top: 6px solid #b5c0cf; border-bottom: 0; margin: 0 0 1px 4px; }
ul { list-style: none; margin: 0; padding: 0; }
li { height: 31px; display: flex; align-items: center; gap: 7px; }
.g { font: 700 9px "Liberation Mono", monospace; } .blue { fill: #2f7fd0; } .red { fill: #d02020; }
.pc { font: 700 11px "Open Sans", sans-serif; fill: #345c8c; }
.toolpath .big { width: 75px; }
.toolpath ul { letter-spacing: -.28px; }
.job .setup { width: 50px; margin-left: 1px; } .job .folder { width: 48px; margin-right: 5px; }
.job ul { letter-spacing: 0; }
.drilling .big { width: 60px; }
.milling .big { width: 51px; margin-right: 4px; }
.milling ul { letter-spacing: -.05px; }
.three .big { width: 72px; margin-right: 3px; }
.multi .swarf { width: 51px; } .multi .mac { width: 130px; }
.turning .rough { width: 121px; } .turning .finish { width: 109px; } .turning .groove { width: 60px; margin-right: 3px; }
.part .big { width: 120px; margin-right: 3px; }
.cutting .big { width: 78px; }
.orient .big { width: 106px; margin-right: 3px; }
.manage .big { width: 90px; margin-right: 3px; }
.help .big { width: 122px; }

.work { height: 809px; display: grid; grid-template-columns: 304px 1616px; }
.browser { display: flex; flex-direction: column; border-right: 1px solid #1d222b; background: #fff; overflow: hidden; }
.btabs { height: 24px; background: #222831; display: flex; align-items: center; font-size: 13px; color: #999; }
.model { width: 42px; padding-left: 4px; letter-spacing: -.5px; }
.cam { width: 56px; height: 24px; line-height: 24px; background: #3b4453; color: #fff; display: flex; align-items: center; justify-content: space-between; padding: 0 7px 0 4px; }
.cam svg { width: 10px; height: 10px; }
.btabs .plus { width: 10px; height: 10px; margin-left: 7px; }
.btabs .menu { width: 14px; height: 12px; margin-left: auto; margin-right: 6px; }
.tree { position: relative; flex: 1; color: #111; padding-top: 2px; }
.row { height: 22px; display: flex; align-items: center; gap: 6px; }
.row em { width: 11px; height: 11px; border: 1px solid #888; background: linear-gradient(#234a9a, #234a9a) center/7px 1px no-repeat #f4f4f4; }
.row svg.f { width: 20px; height: 17px; } .row svg.chk { width: 16px; height: 16px; margin-right: -4px; }
.l0 { padding-left: 3px; gap: 5px; letter-spacing: -.02px; } .l1 { padding-left: 8px; } .l2 { padding-left: 31px; gap: 6px; } .l3 { padding-left: 54px; }
.l1 em, .l3 em { margin-right: 1px; } .l2 em { margin-right: 3px; }
.l4 { padding-left: 95px; gap: 5px; letter-spacing: .02px; }
.sel { background: #0078d7; color: #fff; outline: 1px dotted #e08020; letter-spacing: -.15px; }
.links { position: absolute; left: 0; top: 0; width: 110px; height: 170px; }
.hscroll { height: 19px; background: #efefef; padding: 8px 0 0 21px; }
.hscroll i { display: block; width: 223px; height: 3px; border-radius: 2px; background: #858585; }
.view { display: flex; flex-direction: column; }
.scene { width: 1616px; height: 779px; }
.white { stroke: #fff; color: #fff; }
.edge { stroke: #c2c2c3; color: #c2c2c3; }
.wall { stroke: #4a4a4d; color: #4a4a4d; }
.floor { stroke: #9b9ca0; color: #9b9ca0; }
.path { stroke: #0a0aff; color: #0a0aff; }
.axes text { font: 12px "Liberation Sans", sans-serif; }
.viewcube text { font: 700 10px "Liberation Sans", sans-serif; fill: #4c5059; letter-spacing: .3px; }
.doctabs { height: 30px; background: #222831; display: flex; align-items: center; }
.home { width: 80px; height: 30px; background: #454e60; color: #c8ccd2; display: flex; align-items: center; gap: 4px; padding-left: 6px; padding-top: 2px; }
.docfile { width: 146px; height: 30px; background: #3b4453; border-bottom: 4px solid #38abe0; display: flex; align-items: center; justify-content: space-between; padding: 2px 8px 0 9px; }
.docfile svg { width: 11px; height: 11px; }
.doctabs .menu { width: 18px; height: 16px; margin-left: auto; margin-right: 6px; }
.status { height: 27px; background: #2d3440; display: flex; line-height: 33px; padding-left: 1px; }
.status span { flex: 1; }
.status b { font-weight: 400; width: 40px; height: 25px; margin-top: 2px; border-left: 1px solid #d0d4da; padding-left: 10px; line-height: 25px; }
.status b + b { width: 39px; border-right: 1px solid #d0d4da; padding-left: 9px; }
```
